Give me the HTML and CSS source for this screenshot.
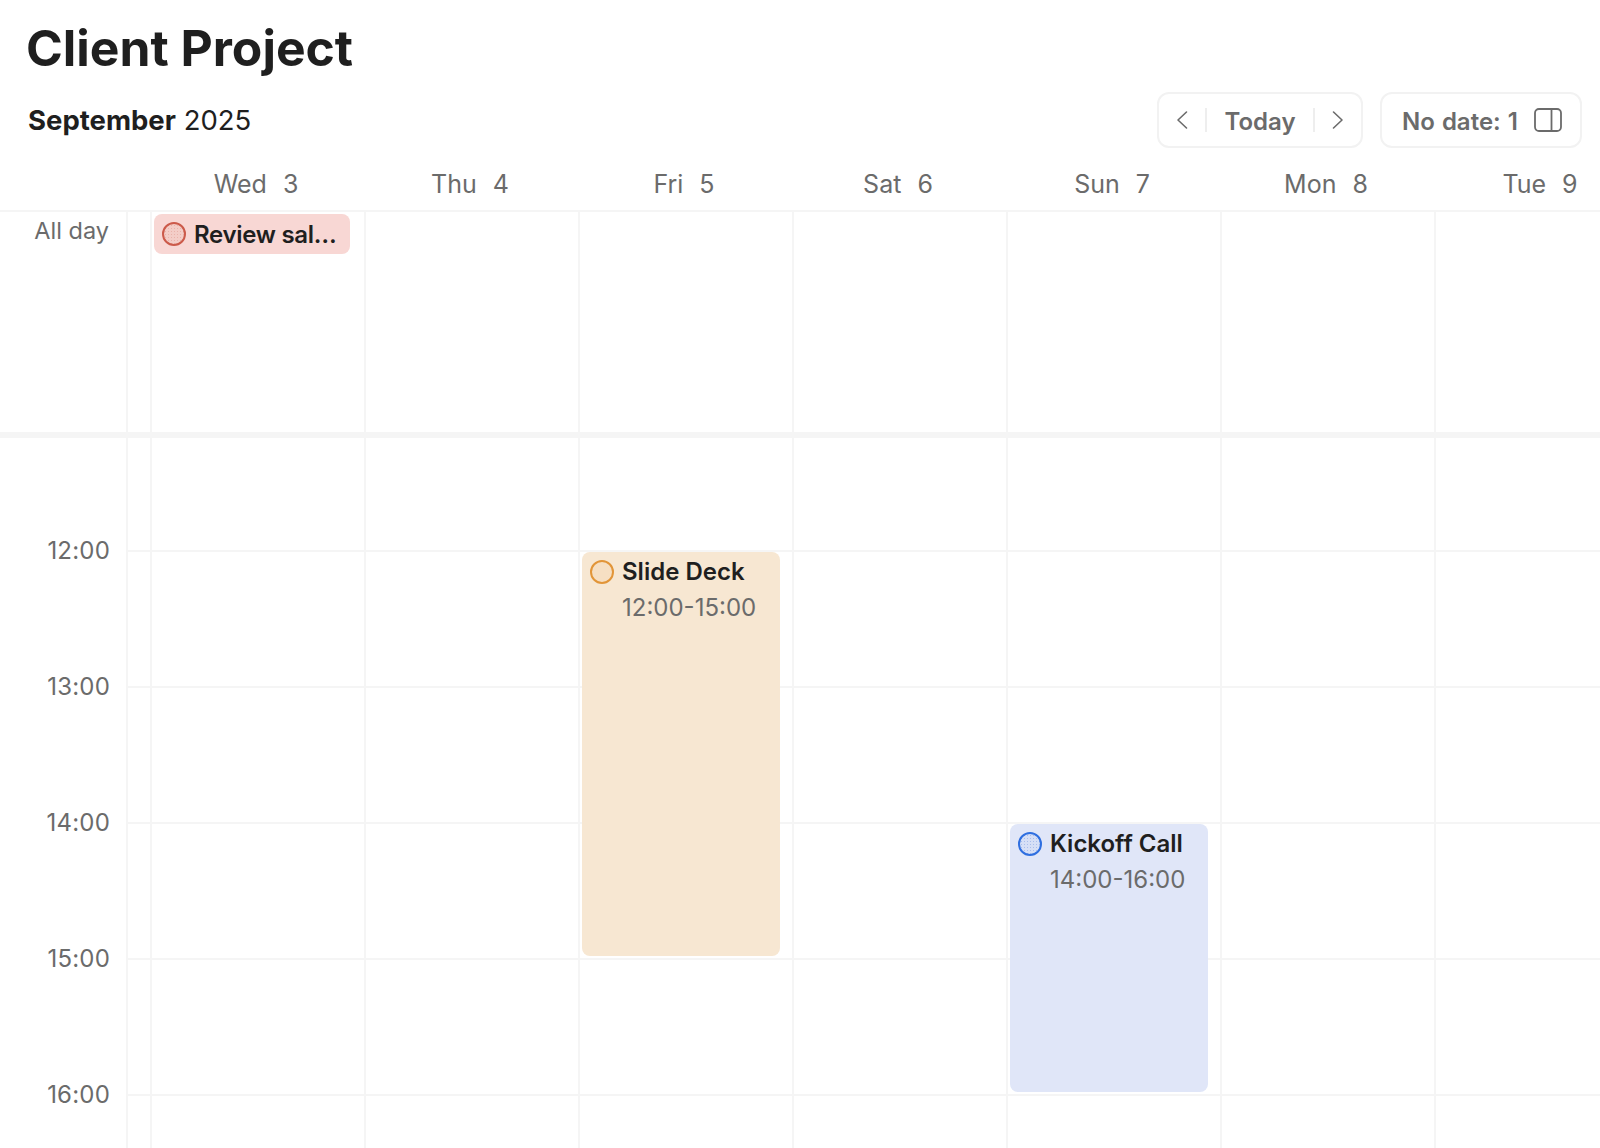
FILE: index.html
```html
<!DOCTYPE html>
<html lang="en">

<head>
    <meta charset="UTF-8">
    <meta name="viewport" content="width=device-width, initial-scale=1.0">
    <title>Client Project</title>
    <link rel="stylesheet" href="styles.css">
</head>

<body>
    <main class="page">
        <h1 class="title">Client Project</h1>

        <header class="toolbar">
            <div class="month"><strong>September</strong> 2025</div>
            <div class="actions">
                <div class="btn-group">
                    <button class="nav-btn" type="button" aria-label="Previous">
                        <svg width="12" height="20" viewBox="0 0 12 20" fill="none" stroke="currentColor" stroke-width="1.600" stroke-linecap="round" stroke-linejoin="round">
                            <path d="M10.500 2 2 10l8.500 8" />
                        </svg>
                    </button>
                    <span class="sep"></span>
                    <button class="today-btn" type="button">Today</button>
                    <span class="sep"></span>
                    <button class="nav-btn" type="button" aria-label="Next">
                        <svg width="12" height="20" viewBox="0 0 12 20" fill="none" stroke="currentColor" stroke-width="1.600" stroke-linecap="round" stroke-linejoin="round">
                            <path d="M1.500 2 10 10l-8.500 8" />
                        </svg>
                    </button>
                </div>
                <button class="no-date" type="button">
                    <span class="no-date-text">No date: 1</span>
                    <svg width="28" height="24" viewBox="0 0 28 24" fill="none" stroke="currentColor" stroke-width="1.800">
                        <rect x="1" y="1" width="26" height="22" rx="4" />
                        <path d="M17.500 1v22" />
                    </svg>
                </button>
            </div>
        </header>

        <section class="calendar">
            <div class="day-names">
                <div class="day-name"><span>Wed</span><span>3</span></div>
                <div class="day-name"><span>Thu</span><span>4</span></div>
                <div class="day-name"><span>Fri</span><span>5</span></div>
                <div class="day-name"><span>Sat</span><span>6</span></div>
                <div class="day-name"><span>Sun</span><span>7</span></div>
                <div class="day-name"><span>Mon</span><span>8</span></div>
                <div class="day-name"><span>Tue</span><span>9</span></div>
            </div>

            <div class="row all-day">
                <div class="gutter"><span class="all-day-label">All day</span></div>
                <div class="spacer"></div>
                <div class="cell">
                    <div class="chip">
                        <span class="dot dot-red"></span>
                        <span class="event-title">Review sal…</span>
                    </div>
                </div>
                <div class="cell"></div>
                <div class="cell"></div>
                <div class="cell"></div>
                <div class="cell"></div>
                <div class="cell"></div>
                <div class="cell"></div>
            </div>

            <div class="row row-first">
                <div class="gutter"></div>
                <div class="spacer"></div>
                <div class="cell"></div>
                <div class="cell"></div>
                <div class="cell"></div>
                <div class="cell"></div>
                <div class="cell"></div>
                <div class="cell"></div>
                <div class="cell"></div>
            </div>

            <div class="row hour">
                <div class="gutter"><span class="time">12:00</span></div>
                <div class="spacer"></div>
                <div class="cell"></div>
                <div class="cell"></div>
                <div class="cell">
                    <div class="event event-orange event-3h">
                        <span class="dot dot-orange"></span>
                        <div>
                            <div class="event-title">Slide Deck</div>
                            <div class="event-time">12:00-15:00</div>
                        </div>
                    </div>
                </div>
                <div class="cell"></div>
                <div class="cell"></div>
                <div class="cell"></div>
                <div class="cell"></div>
            </div>

            <div class="row hour">
                <div class="gutter"><span class="time">13:00</span></div>
                <div class="spacer"></div>
                <div class="cell"></div>
                <div class="cell"></div>
                <div class="cell"></div>
                <div class="cell"></div>
                <div class="cell"></div>
                <div class="cell"></div>
                <div class="cell"></div>
            </div>

            <div class="row hour">
                <div class="gutter"><span class="time">14:00</span></div>
                <div class="spacer"></div>
                <div class="cell"></div>
                <div class="cell"></div>
                <div class="cell"></div>
                <div class="cell"></div>
                <div class="cell">
                    <div class="event event-blue event-2h">
                        <span class="dot dot-blue"></span>
                        <div>
                            <div class="event-title">Kickoff Call</div>
                            <div class="event-time">14:00-16:00</div>
                        </div>
                    </div>
                </div>
                <div class="cell"></div>
                <div class="cell"></div>
            </div>

            <div class="row hour">
                <div class="gutter"><span class="time">15:00</span></div>
                <div class="spacer"></div>
                <div class="cell"></div>
                <div class="cell"></div>
                <div class="cell"></div>
                <div class="cell"></div>
                <div class="cell"></div>
                <div class="cell"></div>
                <div class="cell"></div>
            </div>

            <div class="row hour row-last">
                <div class="gutter"><span class="time">16:00</span></div>
                <div class="spacer"></div>
                <div class="cell"></div>
                <div class="cell"></div>
                <div class="cell"></div>
                <div class="cell"></div>
                <div class="cell"></div>
                <div class="cell"></div>
                <div class="cell"></div>
            </div>
        </section>
    </main>
</body>

</html>
```

FILE: styles.css
```css
html {
    box-sizing: border-box;
}

*,
*::before,
*::after {
    box-sizing: inherit;
    margin: 0;
    padding: 0;
}

:root {
    --text-color: #1f1f1f;
    --muted-color: #6b6b6b;
    --line-color: #f5f5f5;
}

body {
    background-color: #fff;
    color: var(--text-color);
    font-family: 'Inter', sans-serif;
    overflow: hidden;
}

.page {
    width: 1600px;
    height: 1148px;
    overflow: hidden;
}

.title {
    font-size: 49.800px;
    font-weight: 700;
    line-height: 58px;
    padding: 19px 0 0 26px;
}

.toolbar {
    display: flex;
    justify-content: space-between;
    align-items: center;
    height: 56px;
    margin-top: 15px;
    padding: 0 18px 0 28px;
}

.month {
    font-size: 27.500px;
}

.month strong {
    font-weight: 700;
}

.actions {
    display: flex;
    gap: 17px;
}

button {
    background: none;
    border: none;
    color: var(--muted-color);
    font-family: inherit;
    font-size: 24px;
    font-weight: 600;
}

.btn-group,
.no-date {
    display: flex;
    align-items: center;
    height: 56px;
    border: 2px solid #f2f2f2;
    border-radius: 12px;
}

.btn-group {
    width: 206px;
    justify-content: center;
    gap: 17px;
}

.today-btn,
.no-date-text {
    padding-top: 2px;
}

.nav-btn {
    display: flex;
    width: 12px;
}

.sep {
    width: 2px;
    height: 24px;
    background-color: #eee;
}

.no-date {
    width: 202px;
    justify-content: space-between;
    padding: 0 18px 0 20px;
}

.no-date-text {
    word-spacing: 1px;
}

.calendar {
    width: 1649px;
}

.day-names {
    display: flex;
    height: 64px;
    padding-left: 149px;
    border-bottom: 2px solid var(--line-color);
}

.day-name {
    display: flex;
    justify-content: center;
    align-items: center;
    gap: 16px;
    width: 214px;
    padding-top: 9px;
    font-size: 25px;
    color: var(--muted-color);
}

.row {
    display: flex;
}

.gutter {
    position: relative;
    width: 126px;
    color: var(--muted-color);
    font-size: 24px;
    text-align: right;
}

.all-day-label {
    display: block;
    padding: 4px 17px 0 0;
    font-size: 23.500px;
}

.time {
    position: absolute;
    right: 16px;
    top: -14px;
    letter-spacing: 0.200px;
}

.spacer {
    width: 24px;
    border-left: 2px solid var(--line-color);
}

.cell {
    position: relative;
    width: 214px;
    border-left: 2px solid var(--line-color);
}

.all-day {
    height: 220px;
}

.row-first {
    height: 118px;
    border-top: 6px solid var(--line-color);
}

.hour {
    height: 136px;
}

.hour .spacer,
.hour .cell {
    border-top: 2px solid var(--line-color);
}

.row-last {
    height: 54px;
}

.dot {
    flex-shrink: 0;
    width: 24px;
    height: 24px;
    border-radius: 50%;
    border: 2px solid;
}

.dot-red {
    border-color: #cc5a4a;
    background-color: #f3cdc7;
    background-image: radial-gradient(#e9b2aa 0.6px, transparent 0.8px);
    background-size: 3px 3px;
}

.dot-orange {
    border-color: #e29538;
    background-color: #f6dfc3;
}

.dot-blue {
    border-color: #2f6fe0;
    background-color: #d6dff6;
    background-image: radial-gradient(#a9bdec 0.6px, transparent 0.8px);
    background-size: 3px 3px;
}

.chip {
    display: flex;
    align-items: center;
    gap: 8px;
    width: 196px;
    height: 40px;
    margin: 2px 0 0 2px;
    padding-left: 8px;
    border-radius: 8px;
    background-color: #f8d7d4;
}

.chip .event-title {
    padding-top: 2px;
    letter-spacing: -0.300px;
}

.event-title {
    font-size: 24px;
    font-weight: 600;
    line-height: 30px;
}

.event-time {
    margin-top: 6px;
    color: var(--muted-color);
    font-size: 24px;
    line-height: 30px;
}

.event {
    position: absolute;
    left: 2px;
    top: 0;
    z-index: 1;
    display: flex;
    gap: 8px;
    width: 198px;
    padding: 5px 8px;
    border-radius: 8px;
}

.event .dot {
    margin-top: 3px;
}

.event-orange {
    background-color: #f7e7d2;
}

.event-blue {
    background-color: #e0e6f8;
}

.event-3h {
    height: 404px;
}

.event-2h {
    height: 268px;
}
```
